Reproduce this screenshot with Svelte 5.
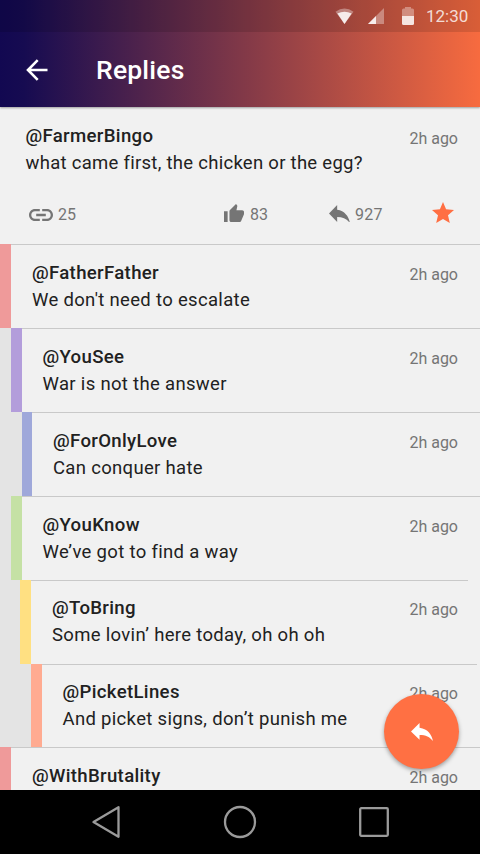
<script>
  const replies = [
    { user: '@FatherFather', text: "We don't need to escalate", color: '#ef9a9a', indent: 0, width: 11 },
    { user: '@YouSee', text: 'War is not the answer', color: '#b39ddb', indent: 11, width: 10.5 },
    { user: '@ForOnlyLove', text: 'Can conquer hate', color: '#9fa8da', indent: 21.5, width: 10.5 },
    { user: '@YouKnow', text: 'We’ve got to find a way', color: '#c5e1a5', indent: 11, width: 10.5 },
    { user: '@ToBring', text: 'Some lovin’ here today, oh oh oh', color: '#ffe082', indent: 20, width: 11, gap: 12 },
    { user: '@PicketLines', text: 'And picket signs, don’t punish me', color: '#ffab91', indent: 31, width: 10.5, gap: 3 },
    { user: '@WithBrutality', text: '', color: '#ef9a9a', indent: 0, width: 11 }
  ];
</script>

<div class="screen">
  <header>
    <div class="status">
      <svg class="wifi" width="19" height="17" viewBox="0 0 19 17">
        <path d="M0.5 3.7Q9.5-2.8 18.5 3.7L9.5 16Z" fill="#fff" opacity=".35" />
        <path d="M2.4 5.6Q9.5 1.8 16.6 5.6L9.5 16Z" fill="#fff" opacity=".85" />
      </svg>
      <svg class="signal" width="16" height="16" viewBox="0 0 16 16">
        <path d="M0 16L16 0V16Z" fill="#fff" opacity=".35" />
        <path d="M0 16L8 8V16Z" fill="#fff" opacity=".85" />
      </svg>
      <svg class="battery" width="12" height="18" viewBox="0 0 12 18">
        <path d="M0 9V3Q0 1.5 1.5 1.5H3V0H9V1.5H10.5Q12 1.5 12 3V9Z" fill="#fff" opacity=".35" />
        <path d="M0 9H12V16.5Q12 18 10.5 18H1.5Q0 18 0 16.5Z" fill="#fff" opacity=".85" />
      </svg>
      <span>12:30</span>
    </div>
    <div class="toolbar">
      <svg width="22" height="22" viewBox="0 0 22 22" fill="none" stroke="#fff" stroke-width="2.6">
        <path d="M21.5 11H2M11.7 1.2L2 11L11.7 20.8" />
      </svg>
      <h1>Replies</h1>
    </div>
  </header>

  <main>
    <section class="post">
      <div class="line">
        <span class="user">@FarmerBingo</span>
        <span class="time">2h ago</span>
      </div>
      <p>what came first, the chicken or the egg?</p>
      <div class="actions">
        <div class="action link">
          <svg width="24" height="12" viewBox="2 7 20 10" preserveAspectRatio="none">
            <path d="M3.9 12c0-1.710 1.390-3.100 3.100-3.100h4V7H7c-2.760 0-5 2.240-5 5s2.240 5 5 5h4v-1.900H7c-1.710 0-3.100-1.390-3.100-3.100zM8 13h8v-2H8v2zm9-6h-4v1.900h4c1.710 0 3.100 1.390 3.100 3.100s-1.390 3.100-3.100 3.100h-4V17h4c2.760 0 5-2.240 5-5s-2.240-5-5-5z" />
          </svg>
          25
        </div>
        <div class="action like">
          <svg width="20" height="18" viewBox="1 1 22 20" preserveAspectRatio="none">
            <path d="M1 21h4V9H1v12zm22-11c0-1.100-.9-2-2-2h-6.310l.95-4.570.03-.32c0-.41-.17-.79-.44-1.060L14.170 1 7.590 7.590C7.220 7.950 7 8.450 7 9v10c0 1.100.9 2 2 2h9c.83 0 1.540-.5 1.840-1.220l3.020-7.050c.09-.23.14-.47.14-.73v-2z" />
          </svg>
          83
        </div>
        <div class="action reply">
          <svg width="21" height="17" viewBox="3 5 18 14" preserveAspectRatio="none">
            <path d="M10 9V5l-7 7 7 7v-4.100c5 0 8.500 1.600 11 5.100-1-5-4-10-11-11z" />
          </svg>
          927
        </div>
        <svg class="star" width="22" height="21" viewBox="2 2 20 19" preserveAspectRatio="none">
          <path d="M12 17.270L18.180 21l-1.640-7.030L22 9.240l-7.190-.61L12 2 9.190 8.630 2 9.240l5.460 4.730L5.820 21z" />
        </svg>
      </div>
    </section>

    {#each replies as reply}
      <article style="padding-left: {reply.indent}px">
        <div class="bar" style="width: {reply.width}px; background: {reply.color}"></div>
        <div class="body">
          <div class="divider" style="margin-right: {reply.gap || 0}px"></div>
          <div class="line">
            <span class="user">{reply.user}</span>
            <span class="time">2h ago</span>
          </div>
          <p>{reply.text}</p>
        </div>
      </article>
    {/each}
  </main>

  <button class="fab" aria-label="Reply">
    <svg width="22" height="18" viewBox="3 5 18 15" preserveAspectRatio="none">
      <path d="M10 9V5l-7 7 7 7v-4.100c5 0 8.500 1.600 11 5.100-1-5-4-10-11-11z" />
    </svg>
  </button>

  <nav>
    <svg width="30" height="34" viewBox="0 0 30 34"><path d="M2.5 17L27.5 2.2V31.8Z" /></svg>
    <svg width="34" height="34" viewBox="0 0 34 34"><circle cx="17" cy="17" r="15" /></svg>
    <svg width="30" height="30" viewBox="0 0 30 30"><rect x="1.2" y="1.2" width="27.6" height="27.6" rx="1" /></svg>
  </nav>
</div>

<style>
  :global(body) {
    margin: 0;
    overflow: hidden;
  }

  .screen {
    position: relative;
    display: flex;
    flex-direction: column;
    width: 480px;
    height: 854px;
    overflow: hidden;
    background: #f1f1f1;
    color: #212121;
    font-family: Roboto, sans-serif;
  }

  svg {
    display: block;
    flex: none;
  }

  header {
    flex: none;
    height: 107px;
    background: linear-gradient(90deg, #120851 0%, #160b51 5%, #803848 50%, #f76b3f 100%);
    box-shadow: 0 1px 2px rgba(0, 0, 0, 0.35);
    z-index: 1;
  }

  .status {
    display: flex;
    align-items: center;
    box-sizing: border-box;
    height: 32px;
    padding: 0 11px 0 334.5px;
    background: rgba(0, 0, 0, 0.12);
    color: rgba(255, 255, 255, 0.8);
    font-size: 17px;
  }

  .signal {
    margin-left: 14px;
  }

  .battery {
    margin: 0 12.5px 0 18px;
  }

  .toolbar {
    display: flex;
    align-items: center;
    height: 75px;
    padding-left: 26px;
  }

  h1 {
    margin: 0 0 0 48px;
    color: #fff;
    font-size: 26.5px;
    font-weight: 500;
    letter-spacing: 0.2px;
  }

  main {
    flex: 1;
    min-height: 0;
    overflow: hidden;
    background: #e4e4e4;
  }

  .post {
    box-sizing: border-box;
    height: 137.4px;
    padding: 15.5px 22px 0 25.5px;
    background: #f1f1f1;
  }

  .line {
    display: flex;
    justify-content: space-between;
    height: 27px;
    line-height: 27px;
  }

  .user {
    font-size: 18.6px;
    font-weight: 500;
    letter-spacing: 0.33px;
  }

  .time {
    padding-top: 2px;
    color: #757575;
    font-size: 16px;
  }

  p {
    margin: 0;
    font-size: 18.5px;
    line-height: 27px;
    letter-spacing: 0.28px;
  }

  .actions {
    display: flex;
    align-items: center;
    height: 30px;
    margin-top: 23px;
    padding-left: 3.5px;
    color: #757575;
    font-size: 16px;
    fill: #757575;
  }

  .action {
    display: flex;
    align-items: center;
    gap: 5px;
  }

  .link {
    width: 195px;
  }

  .like {
    gap: 6px;
    width: 105px;
  }

  .reply {
    letter-spacing: 0.3px;
  }

  .reply svg,
  .like svg {
    margin-bottom: 3px;
  }

  .star {
    margin: 0 4.5px 5px auto;
    fill: #ff6f43;
  }

  article {
    display: flex;
    height: 83.85px;
    box-sizing: border-box;
  }

  .bar {
    flex: none;
  }

  .body {
    flex: 1;
    padding-left: 21px;
    background: #f1f1f1;
  }

  .body .line {
    margin-top: 14.6px;
    padding-right: 22px;
  }

  .body .time {
    padding-top: 1px;
  }

  .body p {
    letter-spacing: 0.32px;
  }

  .divider {
    height: 1px;
    margin-left: -21px;
    background: #c9c9c9;
  }

  .fab {
    position: absolute;
    right: 21px;
    bottom: 85px;
    display: flex;
    align-items: center;
    justify-content: center;
    width: 75px;
    height: 75px;
    padding: 0;
    border: none;
    border-radius: 50%;
    background: #ff7043;
    box-shadow: 0 2px 4px rgba(0, 0, 0, 0.35);
    fill: #fff;
  }

  nav {
    flex: none;
    display: flex;
    align-items: center;
    justify-content: center;
    gap: 102px;
    height: 64px;
    background: #000;
    fill: none;
    stroke: #9a9a9a;
    stroke-width: 2.3;
    stroke-linejoin: round;
  }
</style>
